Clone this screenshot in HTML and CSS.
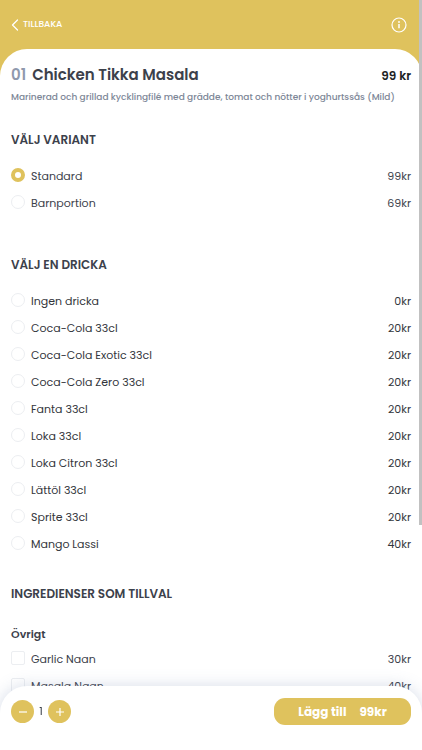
FILE: index.html
```html
<!DOCTYPE html>
<html lang="sv">
<head>
    <meta charset="UTF-8">
    <meta name="viewport" content="width=device-width, initial-scale=1.0">
    <title>Chicken Tikka Masala</title>
    <link rel="stylesheet" href="styles.css">
</head>
<body>
    <div class="page">
        <header class="topbar">
            <a class="back" href="#">
                <svg width="8" height="12" viewBox="0 0 8 12" fill="none" stroke="currentColor" stroke-width="1.3" stroke-linecap="round" stroke-linejoin="round"><path d="M6.5 1 1.5 6l5 5"/></svg>
                TILLBAKA
            </a>
            <button class="info" type="button" aria-label="Information">
                <svg width="16" height="16" viewBox="0 0 16 16" fill="none" stroke="currentColor"><circle cx="8" cy="8" r="7" stroke-width="1.2"/><path d="M8 7v4.3" stroke-width="1.5"/><circle cx="8" cy="5" r=".9" fill="currentColor" stroke="none"/></svg>
            </button>
        </header>

        <main class="card">
            <div class="title-row">
                <h1><span class="number">01</span>Chicken Tikka Masala</h1>
                <span class="price">99 kr</span>
            </div>
            <p class="description">Marinerad och grillad kycklingfilé med grädde, tomat och nötter i yoghurtssås (Mild)</p>

            <section class="group">
                <h2>VÄLJ VARIANT</h2>
                <div class="options">
                    <label class="option"><input type="radio" name="variant" checked><span class="name">Standard</span><span>99kr</span></label>
                    <label class="option"><input type="radio" name="variant"><span class="name">Barnportion</span><span>69kr</span></label>
                </div>
            </section>

            <section class="group drinks">
                <h2>VÄLJ EN DRICKA</h2>
                <div class="options">
                    <label class="option"><input type="radio" name="drink"><span class="name">Ingen dricka</span><span>0kr</span></label>
                    <label class="option"><input type="radio" name="drink"><span class="name">Coca-Cola 33cl</span><span>20kr</span></label>
                    <label class="option"><input type="radio" name="drink"><span class="name">Coca-Cola Exotic 33cl</span><span>20kr</span></label>
                    <label class="option"><input type="radio" name="drink"><span class="name">Coca-Cola Zero 33cl</span><span>20kr</span></label>
                    <label class="option"><input type="radio" name="drink"><span class="name">Fanta 33cl</span><span>20kr</span></label>
                    <label class="option"><input type="radio" name="drink"><span class="name">Loka 33cl</span><span>20kr</span></label>
                    <label class="option"><input type="radio" name="drink"><span class="name">Loka Citron 33cl</span><span>20kr</span></label>
                    <label class="option"><input type="radio" name="drink"><span class="name">Lättöl 33cl</span><span>20kr</span></label>
                    <label class="option"><input type="radio" name="drink"><span class="name">Sprite 33cl</span><span>20kr</span></label>
                    <label class="option"><input type="radio" name="drink"><span class="name">Mango Lassi</span><span>40kr</span></label>
                </div>
            </section>

            <section class="group extras">
                <h2>INGREDIENSER SOM TILLVAL</h2>
                <h3>Övrigt</h3>
                <div class="options">
                    <label class="option"><input type="checkbox" name="extra"><span class="name">Garlic Naan</span><span>30kr</span></label>
                    <label class="option"><input type="checkbox" name="extra"><span class="name">Masala Naan</span><span>40kr</span></label>
                </div>
            </section>
        </main>
    </div>

    <div class="scroll-thumb"></div>

    <footer class="order-bar">
        <div class="quantity">
            <button class="round" type="button" aria-label="Minska">
                <svg width="10" height="10" viewBox="0 0 10 10" stroke="currentColor" stroke-width="1.2"><path d="M1 5h8"/></svg>
            </button>
            <span class="count">1</span>
            <button class="round" type="button" aria-label="Öka">
                <svg width="10" height="10" viewBox="0 0 10 10" stroke="currentColor" stroke-width="1.2"><path d="M1 5h8M5 1v8"/></svg>
            </button>
        </div>
        <button class="add" type="button"><span>Lägg till</span><span>99kr</span></button>
    </footer>
</body>
</html>
```

FILE: styles.css
```css
* {
    box-sizing: border-box;
}
body {
    margin: 0;
    font-family: Poppins, Inter, sans-serif;
    font-size: 11px;
    line-height: 17px;
    color: #3c414b;
    background: #dfc25d;
}
h1, h2, h3, p {
    margin: 0;
}
button {
    font-family: inherit;
    border: none;
    padding: 0;
    color: #fff;
    cursor: pointer;
}
svg {
    display: block;
}
.page {
    height: 100vh;
    display: flex;
    flex-direction: column;
    overflow-y: auto;
    scrollbar-width: none;
}
.topbar {
    display: flex;
    align-items: center;
    justify-content: space-between;
    padding: 16px 15px 16px 11px;
    color: #fff;
}
.back {
    display: flex;
    align-items: center;
    gap: 4px;
    color: inherit;
    font-size: 9px;
    font-weight: 500;
    text-decoration: none;
}
.info {
    background: none;
}
.card {
    flex: 1 0 auto;
    padding: 16px 11px 80px;
    background: #fff;
    border-radius: 27px 27px 0 0;
}
.title-row {
    display: flex;
    align-items: center;
    justify-content: space-between;
}
h1 {
    font-size: 15px;
    line-height: 20px;
    font-weight: 600;
}
.number {
    margin-right: 6px;
    color: #8f99ad;
}
.price {
    font-size: 12px;
    font-weight: 600;
    color: #1d1f24;
}
.description {
    margin-top: 4px;
    font-size: 9px;
    font-weight: 500;
    color: #7d8797;
}
.group {
    margin-top: 24px;
}
h2 {
    font-size: 12px;
    line-height: 20px;
    font-weight: 600;
}
h3 {
    margin-top: 21px;
    font-size: 11px;
    line-height: 18px;
    font-weight: 600;
}
.options {
    display: flex;
    flex-direction: column;
    gap: 10px;
    margin-top: 18px;
}
.option {
    display: flex;
    align-items: flex-start;
    gap: 6px;
}
.option input {
    appearance: none;
    width: 14px;
    height: 14px;
    margin: 0;
    border: 1px solid #eceef1;
    background: #fff;
}
.option input[type="radio"] {
    border-radius: 50%;
}
.option input[type="checkbox"] {
    border-radius: 2px;
}
.option input[type="radio"]:checked {
    border: 4px solid #dfc25d;
}
.name {
    flex: 1;
}
.drinks {
    margin-top: 43px;
}
.drinks .options {
    color: #33363c;
}
.extras {
    margin-top: 31px;
}
.extras .options {
    margin-top: 8px;
}
.scroll-thumb {
    position: fixed;
    top: 0;
    right: 0;
    width: 3px;
    height: 70vh;
    background: #c1c1c1;
}
.order-bar {
    position: fixed;
    left: 0;
    right: 0;
    bottom: 0;
    display: flex;
    align-items: center;
    justify-content: space-between;
    padding: 12px 11px 25px;
    background: #fff;
    border-radius: 27px 27px 0 0;
    box-shadow: 0 0 16px rgba(120, 140, 180, 0.3);
}
.quantity {
    display: flex;
    align-items: center;
}
.round {
    display: flex;
    align-items: center;
    justify-content: center;
    width: 23px;
    height: 23px;
    border-radius: 50%;
    background: #dfc25d;
}
.count {
    width: 14px;
    text-align: center;
}
.add {
    display: flex;
    align-items: center;
    justify-content: center;
    gap: 13px;
    width: 137px;
    height: 27px;
    border-radius: 11px;
    background: #dfc25d;
    font-size: 12px;
    font-weight: 700;
}
```
